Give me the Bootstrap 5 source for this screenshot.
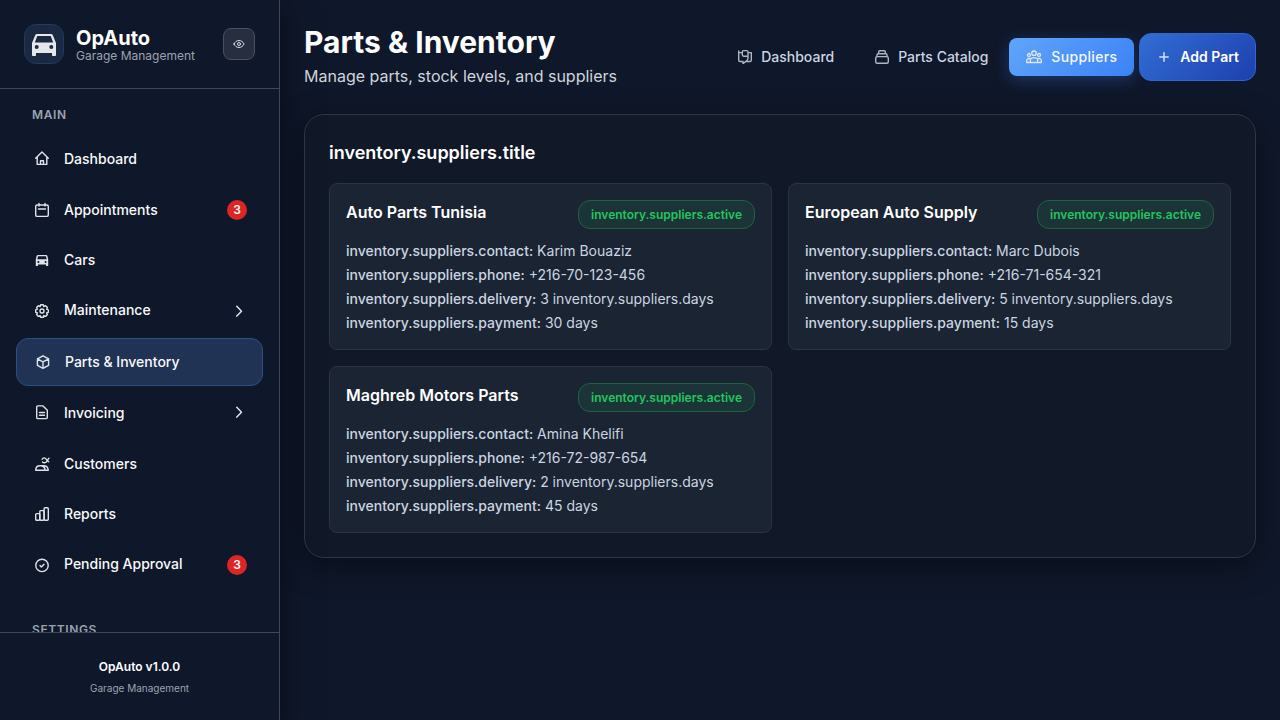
<!DOCTYPE html>
<html lang="en" data-bs-theme="dark">
<head>
<meta charset="utf-8">
<meta name="viewport" content="width=device-width, initial-scale=1">
<title>OpAuto - Parts &amp; Inventory</title>
<link href="https://cdn.jsdelivr.net/npm/bootstrap@5.3.0/dist/css/bootstrap.min.css" rel="stylesheet">
<style>
  body { font-family: Inter, "Liberation Sans", sans-serif; background: #0f172a; color: #fff; font-size: 14px; line-height: 1.6; }
  svg { fill: none; stroke: currentColor; stroke-linecap: round; stroke-linejoin: round; flex-shrink: 0; }
  .sidebar { width: 280px; background: #0f172a; border-right: 1px solid #3f4757; box-shadow: 0 8px 32px rgba(0,0,0,.5); z-index: 2; }
  .brand-row { height: 89px; padding: 0 24px; border-bottom: 1px solid #3f4757; }
  .logo { width: 40px; height: 40px; border-radius: 12px; background: #1a2842; border: 1px solid #213a61; color: #e5e7eb; padding-top: 2px; }
  .brand-text { margin-left: 12px; padding-top: 2px; }
  .brand-name { font-size: 20px; font-weight: 700; line-height: 20px; }
  .brand-sub { font-size: 12px; line-height: 15px; color: #9ca3af; }
  .eye-btn { width: 32px; height: 32px; border-radius: 8px; background: #272e3f; border: 1px solid #4a5060; color: #d9dce1; padding: 0; }
  .side-label { font-size: 12px; font-weight: 600; letter-spacing: .6px; color: #9ca3af; line-height: 19.2px; padding-left: 16px; }
  .label-main { margin-bottom: 11.95px; }
  .label-settings { margin-top: 32px; }
  .side-nav { padding: 16px 16px 0; }
  .side-link { padding: 12px 16px; color: #f9fafb; font-weight: 500; border-radius: 12px; margin-bottom: 4px; gap: 12px; line-height: 22.4px; text-decoration: none; }
  .side-link svg { margin: 0 2px; color: #e0e3e8; }
  .side-link .chev { margin-right: 0; }
  .side-link.current { background: #203354; border: 1px solid #2c4f85; }
  .count { width: 20px; height: 20px; border-radius: 50%; background: #dc2626; font-size: 12px; font-weight: 600; line-height: 20px; text-align: center; }
  .side-foot { height: 88px; border-top: 1px solid #3f4757; text-align: center; padding-top: 24px; }
  .foot-name { font-size: 12px; font-weight: 600; line-height: 19px; }
  .foot-sub { font-size: 10px; line-height: 16px; color: #9ca3af; margin-top: 4px; }
  .content { padding: 24px; }
  .page-head { height: 66px; }
  h1 { font-size: 30px; font-weight: 700; line-height: 36px; }
  .lede { font-size: 16px; line-height: 24px; color: #d1d5db; margin-top: 4px; }
  .tab { height: 38px; padding: 0 17px; gap: 8px; color: #cbd5e1; font-weight: 500; border-radius: 8px; text-decoration: none; }
  .tab svg { color: #aeb6c2; }
  .tab + .tab { margin-left: 6px; }
  .tab.current { margin-left: 4px; width: 125px; gap: 9px; letter-spacing: .35px; color: #f5f8ff; background: linear-gradient(135deg,#60a5fa,#3b82f6); box-shadow: 0 4px 16px rgba(59,130,246,.3); }
  .tab.current svg { color: #e3e6ec; }
  .add-btn { height: 48px; padding: 0 16px; border: 1px solid #2f66d3; border-radius: 12px; color: #fff; font-size: 14px; font-weight: 600; gap: 8px; background: linear-gradient(135deg,#326dd3,#1e40af); margin-left: 5px; }
  .add-btn svg { color: #d5dff5; }
  .panel { margin-top: 24px; padding: 24px; height: 444px; border: 1px solid #2f3746; border-radius: 20px; background: #111827; box-shadow: 0 8px 32px rgba(0,0,0,.4); }
  h2 { font-size: 18px; font-weight: 600; line-height: 28px; margin-bottom: 16px; }
  .sup-grid { display: grid; grid-template-columns: 1fr 1fr; gap: 16px; }
  .supplier { height: 167px; padding: 16px; border: 1px solid #2a3442; border-radius: 8px; background: #1b2432; color: #cbd5e1; line-height: 24px; }
  .sup-top { margin-bottom: 10px; }
  h3 { font-size: 16px; font-weight: 600; line-height: 24px; color: #fff; margin: 0; }
  .supplier strong { font-weight: 500; }
  .status { height: 29px; padding: 0 12px; border: 1px solid #1d6340; border-radius: 12px; background: #1b3437; color: #22c55e; font-size: 12px; font-weight: 600; line-height: 27px; }
</style>
</head>
<body>
<div class="d-flex vh-100 overflow-hidden">
  <aside class="sidebar d-flex flex-column flex-shrink-0 position-relative">
    <div class="brand-row d-flex align-items-center flex-shrink-0">
      <div class="logo d-flex align-items-center justify-content-center">
        <svg width="24" height="24" viewBox="0 0 24 24"><path fill="currentColor" stroke="none" fill-rule="evenodd" d="M5 1h14c.9 0 1.500.4 1.800 1.200L24 10v12c0 .6-.4 1-1 1h-2c-.6 0-1-.4-1-1v-2H4v2c0 .6-.4 1-1 1H1c-.6 0-1-.4-1-1V10l3.200-7.800C3.500 1.400 4.100 1 5 1Zm.3 2L2.800 9.500h18.400L18.700 3ZM4.700 12a2 2 0 1 0 0 4 2 2 0 0 0 0-4Zm14.600 0a2 2 0 1 0 0 4 2 2 0 0 0 0-4Z"/></svg>
      </div>
      <div class="brand-text">
        <div class="brand-name">OpAuto</div>
        <div class="brand-sub">Garage Management</div>
      </div>
      <button class="eye-btn ms-auto d-flex align-items-center justify-content-center" aria-label="Toggle">
        <svg width="12" height="12" viewBox="0 0 12 12"><path d="M1 6c1-2.200 2.800-3.500 5-3.500S10 3.800 11 6c-1 2.200-2.800 3.500-5 3.500S2 8.200 1 6Z"/><circle cx="6" cy="6" r="1.500"/></svg>
      </button>
    </div>
    <nav class="side-nav flex-grow-1 overflow-hidden">
      <div class="side-label label-main">MAIN</div>
      <a href="#" class="side-link d-flex align-items-center"><svg width="16" height="16" viewBox="0 .8 16 16" stroke-width="1.400"><path d="M1.700 8 8 1.800 14.300 8M3.200 6.800v7.400h9.600V6.800M6.500 14v-3.500h3V14"/></svg>Dashboard</a>
      <a href="#" class="side-link d-flex align-items-center"><svg width="16" height="16" viewBox="0 0 16 16" stroke-width="1.400"><rect x="1.700" y="3" width="12.600" height="11.400" rx="1.500"/><path d="M5 1.500V4M11 1.500V4M4.500 7h7"/></svg>Appointments<span class="count ms-auto">3</span></a>
      <a href="#" class="side-link d-flex align-items-center"><svg width="16" height="16" viewBox="0 0 16 16"><path fill="currentColor" stroke="none" fill-rule="evenodd" d="M4 3h8c.7 0 1.200.3 1.400 1L14.200 7.300V14h-2.100v-1.400H3.900V14H1.800V7.300L2.600 4c.2-.7.7-1 1.400-1Zm.1 1.300L3.300 7.200h9.400l-.8-2.900ZM4.400 8.900a1 1 0 1 0 0 2 1 1 0 0 0 0-2Zm7.200 0a1 1 0 1 0 0 2 1 1 0 0 0 0-2Z"/></svg>Cars</a>
      <a href="#" class="side-link d-flex align-items-center"><svg width="16" height="16" viewBox="0 0 16 16" stroke-width="1.400"><path d="M6.700 1.800h2.600l.5 1.700 1.800-.8 1.800 1.800-.8 1.700 1.700.6v2.500l-1.700.6.8 1.700-1.800 1.800-1.800-.8-.5 1.700H6.700l-.5-1.700-1.800.8-1.800-1.800.8-1.700-1.700-.6V6.800l1.700-.6-.8-1.700 1.800-1.800 1.800.8Z"/><circle cx="8" cy="8" r="2"/></svg>Maintenance<svg class="chev ms-auto" width="16" height="16" viewBox="0 0 16 16" stroke-width="1.500"><path d="m5.800 3.300 4.700 4.900-4.700 4.900"/></svg></a>
      <a href="#" class="side-link current d-flex align-items-center"><svg width="16" height="16" viewBox="0 0 16 16" stroke-width="1.400"><path d="m8 1.800 5.600 3v6.600L8 14.400l-5.600-3V4.800ZM2.400 4.800 8 7.800l5.600-3M8 7.800v6.600"/></svg>Parts &amp; Inventory</a>
      <a href="#" class="side-link d-flex align-items-center"><svg width="16" height="16" viewBox="0 .8 16 16" stroke-width="1.400"><path d="M3.700 1.700H9L13.300 6v7.400c0 .6-.4 1-1 1H3.700c-.6 0-1-.4-1-1V2.700c0-.6.4-1 1-1ZM5.500 8.300h5M5.500 11h5"/></svg>Invoicing<svg class="chev ms-auto" width="16" height="16" viewBox="0 .8 16 16" stroke-width="1.500"><path d="m5.800 3.100 4.700 4.900-4.700 4.900"/></svg></a>
      <a href="#" class="side-link d-flex align-items-center"><svg width="16" height="16" viewBox="0 0 16 16" stroke-width="1.400"><path d="M1.700 14.300c0-2.900 1.600-4.500 4.300-4.500h3.700c2.700 0 4.300 1.600 4.600 4.500ZM6.500 9.800c2.300-.2 3.800 1 4.500 3.200M8.200 3.300c.8-1.700 2.900-2 4-.2l1 1.500 1.500 1.200M15 2.200l-1.800 2.400c-.7 2.300-3.500 2.800-4.700 1.400"/></svg>Customers</a>
      <a href="#" class="side-link d-flex align-items-center"><svg width="16" height="16" viewBox="0 0 16 16" stroke-width="1.400"><rect x="1.700" y="7.600" width="4.100" height="6.600" rx="1"/><rect x="5.800" y="4.600" width="4.300" height="9.600" rx="1"/><rect x="10.100" y="1.700" width="4.200" height="12.500" rx="1"/></svg>Reports</a>
      <a href="#" class="side-link d-flex align-items-center"><svg width="16" height="16" viewBox="0 0 16 16" stroke-width="1.400"><circle cx="8" cy="8.400" r="6.200"/><path d="m6 8.600 1.400 1.400 2.600-2.800"/></svg>Pending Approval<span class="count ms-auto">3</span></a>
      <div class="side-label label-settings">SETTINGS</div>
    </nav>
    <div class="side-foot flex-shrink-0">
      <div class="foot-name">OpAuto v1.0.0</div>
      <div class="foot-sub">Garage Management</div>
    </div>
  </aside>
  <main class="content flex-grow-1">
    <header class="page-head d-flex justify-content-between">
      <div>
        <h1 class="mb-0">Parts &amp; Inventory</h1>
        <div class="lede">Manage parts, stock levels, and suppliers</div>
      </div>
      <div class="d-flex align-items-center">
        <a href="#" class="tab d-flex align-items-center"><svg width="16" height="16" viewBox="0 0 16 16" stroke-width="1.400"><path d="M5 3.600H1.700v7.600c0 .8.500 1.300 1.300 1.300h3M11 3.600h3.300v7.600c0 .8-.5 1.300-1.300 1.300H8.500M1.700 2v1.600M5.300 3c0-.9.500-1.400 1.400-1.400h2.900c.9 0 1.400.5 1.400 1.400v4.200H6.700c-.9 0-1.400-.5-1.400-1.400ZM11 7v2.200c0 2.400-1.800 3.300-5 5.200v-2"/></svg>Dashboard</a>
        <a href="#" class="tab d-flex align-items-center"><svg width="16" height="16" viewBox="0 0 16 16" stroke-width="1.400"><rect x="1.700" y="7.600" width="12.600" height="6.700" rx="1.500"/><path d="M3 7.500V6c0-.8.600-1.300 1.300-1.300h7.400c.7 0 1.300.5 1.300 1.300v1.500M4.600 4.500V3c0-.8.500-1.300 1.300-1.300h4.200c.8 0 1.300.5 1.300 1.300v1.500"/></svg>Parts Catalog</a>
        <a href="#" class="tab current d-flex align-items-center"><svg width="16" height="16" viewBox="0 0 16 16" stroke-width="1.300"><circle cx="8" cy="4.200" r="2.200"/><circle cx="3" cy="6" r="1.500"/><circle cx="13" cy="6" r="1.500"/><path d="M4.300 13.500v-1.800c0-2 1.400-3 3.700-3s3.700 1 3.700 3v1.800ZM4.300 13.500H.7v-1.800c0-1.500 1-2.300 3.200-2.200M11.700 13.500h3.600v-1.800c0-1.500-1-2.300-3.200-2.200"/></svg>Suppliers</a>
        <button class="add-btn d-flex align-items-center"><svg width="16" height="16" viewBox="0 0 16 16" stroke-width="1.500"><path d="M8 3.800v8.400M3.800 8h8.400"/></svg>Add Part</button>
      </div>
    </header>
    <section class="panel">
      <h2>inventory.suppliers.title</h2>
      <div class="sup-grid">
        <article class="supplier">
          <div class="d-flex justify-content-between sup-top"><h3>Auto Parts Tunisia</h3><span class="status">inventory.suppliers.active</span></div>
          <div><strong>inventory.suppliers.contact:</strong> Karim Bouaziz</div>
          <div><strong>inventory.suppliers.phone:</strong> +216-70-123-456</div>
          <div><strong>inventory.suppliers.delivery:</strong> 3 inventory.suppliers.days</div>
          <div><strong>inventory.suppliers.payment:</strong> 30 days</div>
        </article>
        <article class="supplier">
          <div class="d-flex justify-content-between sup-top"><h3>European Auto Supply</h3><span class="status">inventory.suppliers.active</span></div>
          <div><strong>inventory.suppliers.contact:</strong> Marc Dubois</div>
          <div><strong>inventory.suppliers.phone:</strong> +216-71-654-321</div>
          <div><strong>inventory.suppliers.delivery:</strong> 5 inventory.suppliers.days</div>
          <div><strong>inventory.suppliers.payment:</strong> 15 days</div>
        </article>
        <article class="supplier">
          <div class="d-flex justify-content-between sup-top"><h3>Maghreb Motors Parts</h3><span class="status">inventory.suppliers.active</span></div>
          <div><strong>inventory.suppliers.contact:</strong> Amina Khelifi</div>
          <div><strong>inventory.suppliers.phone:</strong> +216-72-987-654</div>
          <div><strong>inventory.suppliers.delivery:</strong> 2 inventory.suppliers.days</div>
          <div><strong>inventory.suppliers.payment:</strong> 45 days</div>
        </article>
      </div>
    </section>
  </main>
</div>
<script src="https://cdn.jsdelivr.net/npm/bootstrap@5.3.0/dist/js/bootstrap.bundle.min.js"></script>
</body>
</html>
